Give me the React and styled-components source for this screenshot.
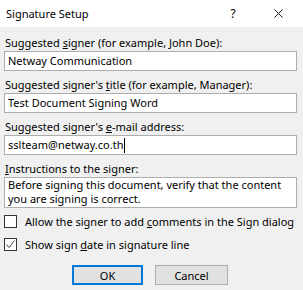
import React from "react";
import styled, { createGlobalStyle } from "styled-components";

const Global = createGlobalStyle`
  html, body {
    margin: 0;
    padding: 0;
    background: #f0f0f0;
  }
  body {
    font-family: "Noto Sans", "Segoe UI", sans-serif;
    font-size: 11px;
    color: #000;
  }
`;

function App() {
  return (
    <Window>
      <Global />
      <TitleBar>
        <Title>Signature Setup</Title>
        <TitleButtons>
          <Help>?</Help>
          <Close viewBox="0 0 10 10">
            <path d="M0.5 0.5 L9.5 9.5 M9.5 0.5 L0.5 9.5" stroke="#000" strokeWidth="1" fill="none" />
          </Close>
        </TitleButtons>
      </TitleBar>

      <Body>
        <Label>Suggested <u>s</u>igner (for example, John Doe):</Label>
        <Field>Netway Communication</Field>

        <Label>Suggested signer's <u>t</u>itle (for example, Manager):</Label>
        <Field>Test Document Signing Word</Field>

        <Label>Suggested signer's <u>e</u>-mail address:</Label>
        <Field>sslteam@netway.co.th<Caret /></Field>

        <Label><u>I</u>nstructions to the signer:</Label>
        <Field multi>
          Before signing this document, verify that the content you are signing is correct.
        </Field>

        <CheckRow top={1}>
          <Box />
          <span>Allow the signer to add <u>c</u>omments in the Sign dialog</span>
        </CheckRow>
        <CheckRow top={10}>
          <Box>
            <svg width="11" height="11" viewBox="0 0 11 11">
              <path d="M1.5 5.5 L4 8.5 L9.5 1.5" stroke="#444" strokeWidth="1" fill="none" />
            </svg>
          </Box>
          <span>Show sign <u>d</u>ate in signature line</span>
        </CheckRow>

        <Buttons>
          <Button primary>OK</Button>
          <Button>Cancel</Button>
        </Buttons>
      </Body>
    </Window>
  );
}

export default App;

const Window = styled.div`
  width: 303px;
  height: 290px;
  background: #f0f0f0;
  overflow: hidden;
`;

const TitleBar = styled.div`
  height: 27px;
  background: #fff;
  display: flex;
  align-items: center;
  justify-content: space-between;
  padding-left: 6px;
`;

const Title = styled.div`
  font-size: 11px;
`;

const TitleButtons = styled.div`
  display: flex;
  align-items: center;
`;

const Help = styled.span`
  font-size: 12px;
  width: 46px;
  text-align: center;
`;

const Close = styled.svg`
  width: 9px;
  height: 9px;
  margin: 0 20px 0 18px;
`;

const Body = styled.div`
  padding: 8px 6px 0 4px;
  display: flex;
  flex-direction: column;
`;

const Label = styled.div`
  height: 16px;
  line-height: 16px;
  padding-left: 1px;
  white-space: nowrap;
`;

const Field = styled.div`
  height: ${p => (p.multi ? "31px" : "20px")};
  box-sizing: border-box;
  border: 1px solid #adadad;
  background: #fff;
  padding: 0 3px;
  line-height: ${p => (p.multi ? "14px" : "18px")};
  margin-bottom: 6px;
  white-space: ${p => (p.multi ? "normal" : "nowrap")};
  display: ${p => (p.multi ? "block" : "flex")};
  align-items: center;
`;

const Caret = styled.span`
  display: inline-block;
  width: 1px;
  height: 15px;
  background: #000;
  margin-left: 1px;
`;

const CheckRow = styled.div`
  display: flex;
  align-items: center;
  gap: 8px;
  margin-top: ${p => p.top}px;
  height: 13px;
  white-space: nowrap;
`;

const Box = styled.div`
  width: 13px;
  height: 13px;
  box-sizing: border-box;
  border: 1px solid #333;
  background: #fff;
  display: flex;
  align-items: center;
  justify-content: center;
  flex-shrink: 0;
`;

const Buttons = styled.div`
  display: flex;
  gap: 12px;
  padding-left: 68px;
  margin-top: 14px;
`;

const Button = styled.div`
  width: ${p => (p.primary ? "71px" : "73px")};
  height: 20px;
  box-sizing: border-box;
  background: #e1e1e1;
  border: ${p => (p.primary ? "2px solid #0078d7" : "1px solid #adadad")};
  display: flex;
  align-items: center;
  justify-content: center;
`;
